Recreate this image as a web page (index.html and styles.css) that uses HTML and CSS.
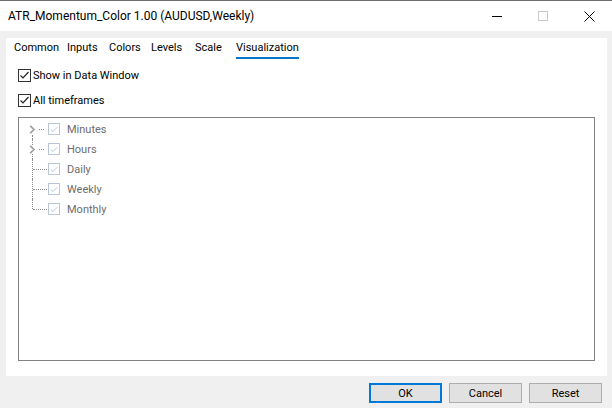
FILE: index.html
```html
<!DOCTYPE html>
<html lang="en">
  <head>
    <meta charset="UTF-8" />
    <title>ATR_Momentum_Color 1.00 (AUDUSD,Weekly)</title>
    <link rel="stylesheet" href="styles.css">
  </head>
  <body>
    <div class="window">
      <div class="titlebar">
        <div class="title">ATR_Momentum_Color 1.00 (AUDUSD,Weekly)</div>
        <div class="controls">
          <span class="ctrl">
            <svg width="10" height="10" viewBox="0 0 10 10"><path d="M0 5.5H10" stroke="#000" stroke-width="1"/></svg>
          </span>
          <span class="ctrl">
            <svg width="10" height="10" viewBox="0 0 10 10"><rect x="0.5" y="0.5" width="9" height="9" fill="none" stroke="#c8c8c8"/></svg>
          </span>
          <span class="ctrl">
            <svg width="11" height="11" viewBox="0 0 11 11"><path d="M0.5 0.5L10.5 10.5M10.5 0.5L0.5 10.5" stroke="#000" stroke-width="1"/></svg>
          </span>
        </div>
      </div>

      <div class="body">
        <div class="panel">
          <div class="tabs">
            <span class="tab">Common</span>
            <span class="tab">Inputs</span>
            <span class="tab">Colors</span>
            <span class="tab">Levels</span>
            <span class="tab">Scale</span>
            <span class="tab active">Visualization</span>
          </div>

          <label class="check">
            <span class="box">
              <svg width="11" height="11" viewBox="0 0 11 11"><path d="M1.5 5.5L4 8L9.5 2" fill="none" stroke="#222" stroke-width="1.2"/></svg>
            </span>
            Show in Data Window
          </label>
          <label class="check">
            <span class="box">
              <svg width="11" height="11" viewBox="0 0 11 11"><path d="M1.5 5.5L4 8L9.5 2" fill="none" stroke="#222" stroke-width="1.2"/></svg>
            </span>
            All timeframes
          </label>

          <div class="tree">
            <div class="node first">
              <span class="branch parent"><span class="chevron">
                <svg width="7" height="9" viewBox="0 0 7 9"><path d="M1.2 0.8L5 4.5L1.2 8.2" fill="none" stroke="#a0a0a0" stroke-width="1.7"/></svg>
              </span></span>
              <span class="box dim"><svg width="11" height="11" viewBox="0 0 11 11"><path d="M2 5.5L4.3 7.8L9 3" fill="none" stroke="#a9bfd6" stroke-width="1"/></svg></span>
              <span class="label">Minutes</span>
            </div>
            <div class="node">
              <span class="branch parent"><span class="chevron">
                <svg width="7" height="9" viewBox="0 0 7 9"><path d="M1.2 0.8L5 4.5L1.2 8.2" fill="none" stroke="#a0a0a0" stroke-width="1.7"/></svg>
              </span></span>
              <span class="box dim"><svg width="11" height="11" viewBox="0 0 11 11"><path d="M2 5.5L4.3 7.8L9 3" fill="none" stroke="#a9bfd6" stroke-width="1"/></svg></span>
              <span class="label">Hours</span>
            </div>
            <div class="node">
              <span class="branch"></span>
              <span class="box dim"><svg width="11" height="11" viewBox="0 0 11 11"><path d="M2 5.5L4.3 7.8L9 3" fill="none" stroke="#a9bfd6" stroke-width="1"/></svg></span>
              <span class="label">Daily</span>
            </div>
            <div class="node">
              <span class="branch"></span>
              <span class="box dim"><svg width="11" height="11" viewBox="0 0 11 11"><path d="M2 5.5L4.3 7.8L9 3" fill="none" stroke="#a9bfd6" stroke-width="1"/></svg></span>
              <span class="label">Weekly</span>
            </div>
            <div class="node last">
              <span class="branch"></span>
              <span class="box dim"><svg width="11" height="11" viewBox="0 0 11 11"><path d="M2 5.5L4.3 7.8L9 3" fill="none" stroke="#a9bfd6" stroke-width="1"/></svg></span>
              <span class="label">Monthly</span>
            </div>
          </div>
        </div>

        <div class="footer">
          <button class="btn default">OK</button>
          <button class="btn">Cancel</button>
          <button class="btn">Reset</button>
          <span class="grip"></span>
        </div>
      </div>
    </div>
  </body>
</html>
```

FILE: styles.css
```css
* {
  box-sizing: border-box;
}
body {
  margin: 0;
  background-color: #f0f0f0;
  font-family: Roboto, "Noto Sans", sans-serif;
  font-size: 11px;
  color: #000;
}
.window {
  width: 612px;
  height: 408px;
  border-top: 1px solid #6e6e6e;
  overflow: hidden;
}
.titlebar {
  height: 30px;
  background-color: #fff;
  display: flex;
  align-items: center;
  justify-content: space-between;
}
.title {
  padding-left: 8px;
  font-size: 12px;
}
.controls {
  display: flex;
  height: 100%;
  align-items: center;
}
.ctrl {
  width: 46px;
  height: 100%;
  display: flex;
  align-items: center;
  justify-content: center;
}
.body {
  padding: 7px 5px 0 6px;
}
.panel {
  background-color: #fff;
  height: 338px;
  padding: 2px 12px 0 12px;
}
.tabs {
  display: flex;
  height: 20px;
  margin-left: -4px;
}
.tab {
  height: 19px;
  line-height: 16px;
}
.tab:nth-child(1) {
  width: 53px;
}
.tab:nth-child(2),
.tab:nth-child(3) {
  width: 42px;
}
.tab:nth-child(4) {
  width: 44px;
}
.tab:nth-child(5) {
  width: 41px;
}
.tab.active {
  border-bottom: 2px solid #0a74c9;
}
.check {
  display: flex;
  align-items: center;
  gap: 2px;
  height: 13px;
  margin-top: 9px;
}
.check + .check {
  margin-top: 12px;
}
.box {
  width: 13px;
  height: 13px;
  border: 1px solid #333;
  display: inline-flex;
  align-items: center;
  justify-content: center;
  background-color: #fff;
  flex: none;
}
.box.dim {
  border-color: #b7c7d8;
  width: 12px;
  height: 12px;
}
.tree {
  margin-top: 10px;
  height: 244px;
  border: 1px solid #828282;
  padding-top: 1px;
}
.node {
  display: flex;
  align-items: center;
  height: 20px;
  padding-left: 9px;
}
.branch {
  position: relative;
  width: 20px;
  height: 20px;
  flex: none;
}
.branch::before {
  content: "";
  position: absolute;
  left: 4px;
  top: 0;
  bottom: 0;
  border-left: 1px dotted #8a8a8a;
}
.branch::after {
  content: "";
  position: absolute;
  left: 5px;
  width: 14px;
  top: 10px;
  border-top: 1px dotted #8a8a8a;
}
.first .branch::before {
  top: 16px;
}
.last .branch::before {
  bottom: 10px;
}
.parent::after {
  left: 11px;
  width: 5px;
}
.chevron {
  position: absolute;
  left: 0;
  top: 6px;
  width: 8px;
  height: 9px;
  background-color: #fff;
  display: flex;
  align-items: center;
  justify-content: center;
  z-index: 1;
}
.label {
  margin-left: 7px;
  color: #6d6d6d;
}
.footer {
  display: flex;
  justify-content: flex-end;
  gap: 7px;
  padding: 7px 5px 0 0;
  position: relative;
}
.btn {
  width: 73px;
  height: 20px;
  background-color: #e1e1e1;
  border: 1px solid #adadad;
  font-family: inherit;
  font-size: 11px;
  padding: 0;
  color: #000;
}
.btn.default {
  border: 2px solid #0078d7;
}
.grip {
  position: absolute;
  right: 1px;
  bottom: -22px;
  width: 6px;
  height: 6px;
  background-image: radial-gradient(circle, #bdbdbd 0.8px, transparent 1px);
  background-size: 3px 3px;
}
```
